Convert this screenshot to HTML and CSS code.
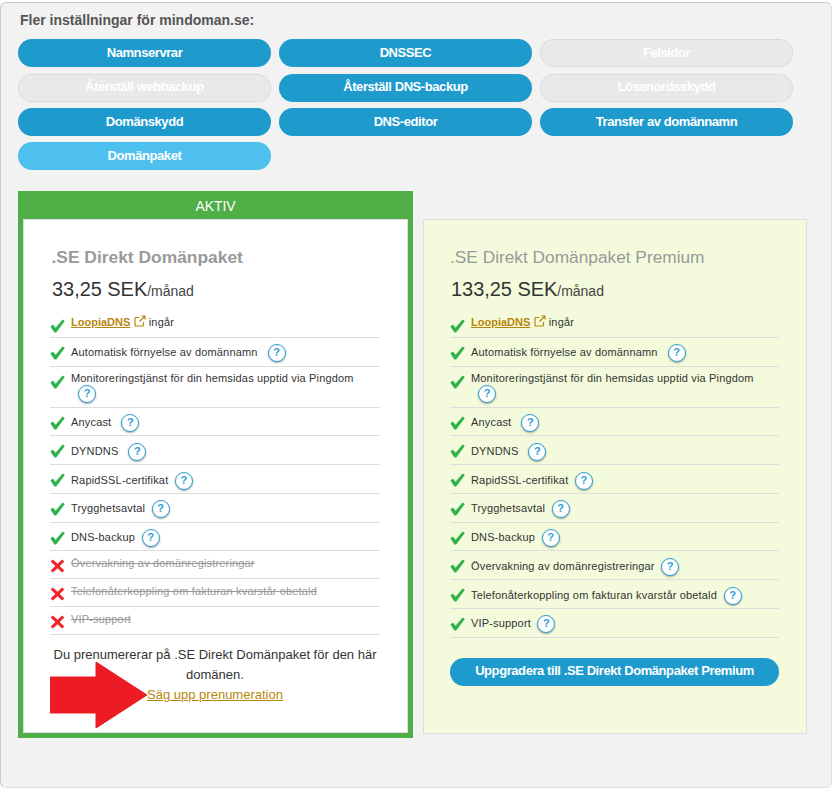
FILE: index.html
```html
<!DOCTYPE html>
<html lang="sv">
<head>
<meta charset="utf-8">
<title>Fler inställningar</title>
<link rel="stylesheet" href="styles.css">
</head>
<body>
<svg class="defs" width="0" height="0" aria-hidden="true">
  <symbol id="check" viewBox="0 0 15 14"><path d="M0.4 7.6 L2.8 5.4 L5.6 8.8 L12.6 0.4 L14.8 1.9 L6.2 13.6 L4.4 13.6 Z" fill="#2fb24a"/></symbol>
  <symbol id="cross" viewBox="0 0 14 14"><path d="M2.4 0.4 L7 4.8 L11.6 0.4 L13.8 2.6 L9.2 7 L13.8 11.4 L11.6 13.6 L7 9.2 L2.4 13.6 L0.2 11.4 L4.8 7 L0.2 2.6 Z" fill="#f4212b"/></symbol>
</svg>
<main class="panel">
  <h2 class="title">Fler inställningar för mindoman.se:</h2>
  <div class="buttons">
    <a class="btn">Namnservrar</a>
    <a class="btn">DNSSEC</a>
    <a class="btn off">Felsidor</a>
    <a class="btn off">Återställ webbackup</a>
    <a class="btn">Återställ DNS-backup</a>
    <a class="btn off">Lösenordsskydd</a>
    <a class="btn">Domänskydd</a>
    <a class="btn">DNS-editor</a>
    <a class="btn">Transfer av domännamn</a>
    <a class="btn light">Domänpaket</a>
  </div>
  <div class="plans">
    <section class="active-wrap">
      <div class="active-label">AKTIV</div>
      <div class="card white">
        <h3 class="name">.SE Direkt Domänpaket</h3>
        <p class="price"><span class="amount">33,25 SEK</span>/månad</p>
        <ul class="feats">
          <li class="lead"><svg class="ic"><use href="#check"/></svg><span class="txt"><a class="link">LoopiaDNS</a> <svg class="ext" viewBox="0 0 12 12"><path d="M9.5 7v3a1 1 0 0 1-1 1H2a1 1 0 0 1-1-1V3.5a1 1 0 0 1 1-1h3.5M7.5 1H11v3.5M11 1 5.5 6.5" fill="none" stroke="#b8860b" stroke-width="1.2"/></svg> ingår</span></li>
          <li><svg class="ic"><use href="#check"/></svg><span class="txt">Automatisk förnyelse av domännamn<i class="q wide">?</i></span></li>
          <li class="two"><svg class="ic"><use href="#check"/></svg><span class="txt">Monitoreringstjänst för din hemsidas upptid via Pingdom <i class="q">?</i></span></li>
          <li><svg class="ic"><use href="#check"/></svg><span class="txt">Anycast<i class="q wide">?</i></span></li>
          <li><svg class="ic"><use href="#check"/></svg><span class="txt">DYNDNS<i class="q wide">?</i></span></li>
          <li><svg class="ic"><use href="#check"/></svg><span class="txt">RapidSSL-certifikat<i class="q">?</i></span></li>
          <li><svg class="ic"><use href="#check"/></svg><span class="txt">Trygghetsavtal<i class="q">?</i></span></li>
          <li><svg class="ic"><use href="#check"/></svg><span class="txt">DNS-backup<i class="q">?</i></span></li>
          <li class="no"><svg class="ic"><use href="#cross"/></svg><span class="txt">Övervakning av domänregistreringar</span></li>
          <li class="no"><svg class="ic"><use href="#cross"/></svg><span class="txt">Telefonåterkoppling om fakturan kvarstår obetald</span></li>
          <li class="no"><svg class="ic"><use href="#cross"/></svg><span class="txt">VIP-support</span></li>
        </ul>
        <p class="sub">Du prenumererar på .SE Direkt Domänpaket för den här domänen.<br><a class="link">Säg upp prenumeration</a></p>
        <svg class="arrow" viewBox="0 0 97 68"><path d="M0 16 H46 V1 L97 34 L46 67 V52 H0 Z" fill="#ed1c24" stroke="#ed1c24" stroke-linejoin="round"/></svg>
      </div>
    </section>
    <section class="card premium">
      <h3 class="name">.SE Direkt Domänpaket Premium</h3>
      <p class="price"><span class="amount">133,25 SEK</span>/månad</p>
      <ul class="feats">
        <li class="lead"><svg class="ic"><use href="#check"/></svg><span class="txt"><a class="link">LoopiaDNS</a> <svg class="ext" viewBox="0 0 12 12"><path d="M9.5 7v3a1 1 0 0 1-1 1H2a1 1 0 0 1-1-1V3.5a1 1 0 0 1 1-1h3.5M7.5 1H11v3.5M11 1 5.5 6.5" fill="none" stroke="#b8860b" stroke-width="1.2"/></svg> ingår</span></li>
        <li><svg class="ic"><use href="#check"/></svg><span class="txt">Automatisk förnyelse av domännamn<i class="q wide">?</i></span></li>
        <li class="two"><svg class="ic"><use href="#check"/></svg><span class="txt">Monitoreringstjänst för din hemsidas upptid via Pingdom <i class="q">?</i></span></li>
        <li><svg class="ic"><use href="#check"/></svg><span class="txt">Anycast<i class="q wide">?</i></span></li>
        <li><svg class="ic"><use href="#check"/></svg><span class="txt">DYNDNS<i class="q wide">?</i></span></li>
        <li><svg class="ic"><use href="#check"/></svg><span class="txt">RapidSSL-certifikat<i class="q">?</i></span></li>
        <li><svg class="ic"><use href="#check"/></svg><span class="txt">Trygghetsavtal<i class="q">?</i></span></li>
        <li><svg class="ic"><use href="#check"/></svg><span class="txt">DNS-backup<i class="q">?</i></span></li>
        <li><svg class="ic"><use href="#check"/></svg><span class="txt">Övervakning av domänregistreringar<i class="q">?</i></span></li>
        <li><svg class="ic"><use href="#check"/></svg><span class="txt">Telefonåterkoppling om fakturan kvarstår obetald<i class="q">?</i></span></li>
        <li><svg class="ic"><use href="#check"/></svg><span class="txt">VIP-support<i class="q">?</i></span></li>
      </ul>
      <a class="btn upgrade">Uppgradera till .SE Direkt Domänpaket Premium</a>
    </section>
  </div>
</main>
</body>
</html>
```
FILE: styles.css
```css
* { box-sizing: border-box; }
html, body { margin: 0; padding: 0; background: #fff; }
body { font-family: "Liberation Sans", Arial, sans-serif; color: #333; }
.defs { position: absolute; }
.panel {
  margin: 2px 1px 0 0;
  height: 786px;
  padding: 9px 18px 0 17px;
  background: #f2f2f2;
  border: 1px solid #c9c9c9;
  border-right-style: dotted;
  border-bottom-style: dotted;
  border-radius: 6px;
}
.title { margin: 0 0 0 2px; font-size: 14px; line-height: 17px; font-weight: 700; color: #555; }
.buttons {
  display: grid;
  grid-template-columns: repeat(3, 253px);
  column-gap: 8px;
  grid-auto-rows: 28px;
  row-gap: 6.33px;
  margin-top: 10.4px;
}
.btn {
  display: flex;
  align-items: center;
  justify-content: center;
  padding-bottom: 2px;
  border-radius: 14px;
  background: #1e9acd;
  color: #fff;
  font-size: 13px;
  font-weight: 700;
  letter-spacing: -0.42px;
}
.btn.off { background: #e9e9e9; border: 1px dotted #ccc; color: #fff; }
.btn.light { background: #4dc0ee; }
.plans { display: flex; align-items: flex-start; gap: 10px; margin-top: 20.6px; }
.active-wrap { width: 395px; background: #50ae47; padding: 0 5px 5px; }
.active-label { height: 28px; line-height: 31px; text-align: center; color: #fff; font-size: 14px; letter-spacing: -0.1px; }
.card { position: relative; border: 1px solid #ddd; }
.card.white { background: #fff; height: 514px; padding: 26px 27px 0 26px; }
.card.premium { margin-top: 28px; width: 384px; height: 515px; background: #f4fbdc; padding: 26px 27px 0 26px; }
.name { margin: 0; font-size: 17.4px; line-height: 22px; font-weight: 700; color: #999; }
.white .name { margin-left: 1.5px; }
.premium .name { font-weight: 400; font-size: 17.3px; }
.price { margin: 8px 0 0 1px; font-size: 14px; line-height: 26px; color: #444; }
.white .price { margin-left: 2px; }
.amount { font-size: 20px; color: #333; letter-spacing: -0.05px; }
.feats { list-style: none; margin: 10px 0 0; padding: 0; }
.feats li { display: flex; min-height: 28.75px; border-bottom: 1px solid #ddd; }
.feats li.lead { min-height: 24px; }
.feats li.two { min-height: 41px; }
.feats li.no { min-height: 27.8px; }
.ic { flex: none; width: 15px; height: 14px; margin: 8px 6px 0 0; }
.lead .ic { margin-top: 5px; }
.txt { font-size: 11px; line-height: 13px; letter-spacing: 0.17px; color: #333; padding-top: 6.5px; }
.lead .txt { padding-top: 1px; }
.no .txt { color: #999; text-decoration: line-through; padding-top: 5.5px; }
.two .txt { padding-top: 5.5px; }
.link { color: #b8860b; text-decoration: underline; }
.lead .link { font-weight: 700; letter-spacing: 0; }
.ext { width: 12px; height: 12px; vertical-align: -1px; }
.q {
  display: inline-block;
  width: 18px;
  height: 18px;
  margin-left: 6.5px;
  border: 1.5px solid #2a9fd6;
  border-radius: 50%;
  background: #fff;
  box-shadow: 0 1px 2px rgba(0,0,0,.35);
  color: #2a9fd6;
  font-size: 11px;
  font-style: normal;
  font-weight: 700;
  line-height: 14px;
  text-align: center;
  letter-spacing: 0;
}
.q.wide { margin-left: 10px; }
.two .q { display: block; margin: 0 0 0 7px; }
.sub { margin: 10px 0 0; font-size: 13px; line-height: 20px; text-align: center; color: #333; }
.arrow { position: absolute; left: 26px; top: 441px; width: 97px; height: 68px; }
.btn.upgrade { height: 28px; margin-top: 20px; }
```
